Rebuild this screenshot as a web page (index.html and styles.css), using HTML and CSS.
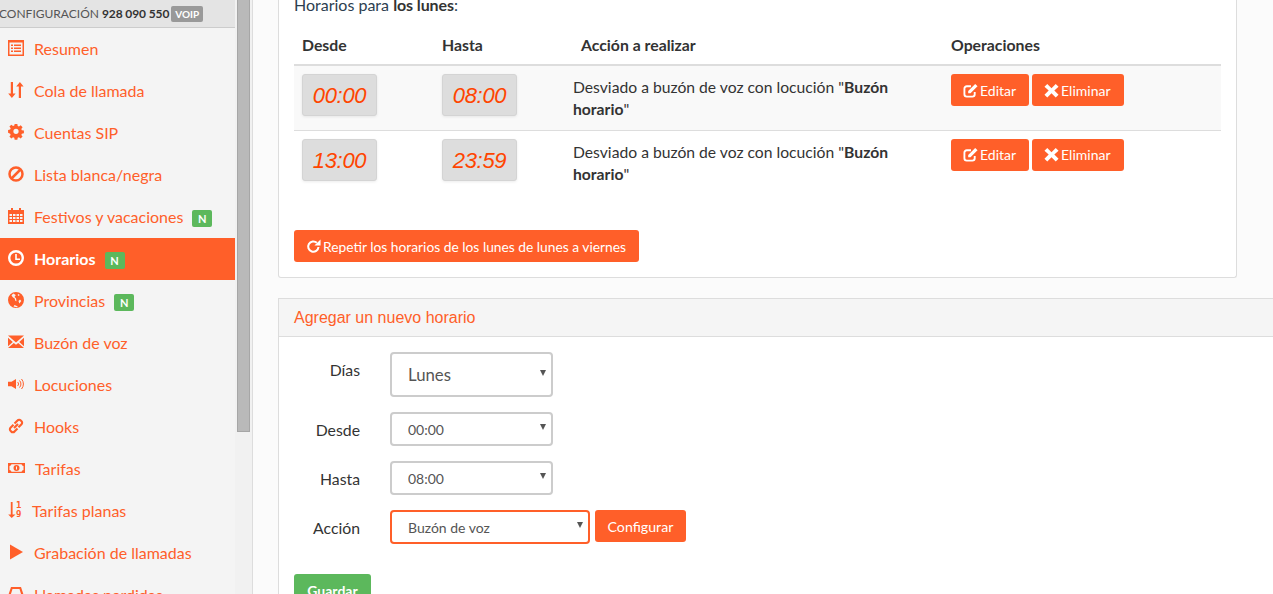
FILE: index.html
```html
<!DOCTYPE html>
<html lang="es">
<head>
<meta charset="utf-8">
<title>Horarios</title>
<link rel="stylesheet" href="styles.css">
</head>
<body>
<div class="app">
  <aside class="sidebar">
    <div class="side-top"><span class="cfg">CONFIGURACIÓN</span> <span class="num">928 090 550</span> <span class="voip">VOIP</span></div>
    <nav class="menu">
      <a class="item"><svg class="ic" viewBox="0 0 16 16"><path fill-rule="evenodd" d="M0 0h16v16H0zM1.500 2.500v12h13v-12zM3 4.500h2v1.500H3zM6 4.500h7v1.500H6zM3 7.500h2v1.500H3zM6 7.500h7v1.500H6zM3 10.500h2v1.500H3zM6 10.500h7v1.500H6z"/></svg><span>Resumen</span></a>
      <a class="item"><svg class="ic" viewBox="0 0 16 16"><path d="M2.800 0h2.200v11.500h2.600L3.900 16 .2 11.500h2.600zM10.800 16V4.500H8.200L11.900 0l3.700 4.500H13V16z"/></svg><span>Cola de llamada</span></a>
      <a class="item"><svg class="ic" viewBox="0 0 16 16"><path fill-rule="evenodd" d="M6.500 0h3l.4 2.300 1.400.6L13.200 1.500l2.100 2.100-1.400 1.900.6 1.400 2.300.4v3l-2.300.4-.6 1.400 1.400 1.900-2.100 2.100-1.900-1.400-1.400.6-.4 2.300h-3l-.4-2.300-1.400-.6-1.900 1.400-2.100-2.100 1.400-1.900-.6-1.400L-.8 9.600v-3l2.300-.4.6-1.400-1.400-1.900 2.100-2.100 1.900 1.400 1.400-.6zM8 5.200a2.900 2.900 0 1 0 0 5.800 2.900 2.900 0 0 0 0-5.800z" transform="translate(0.800 0) scale(.9)"/></svg><span>Cuentas SIP</span></a>
      <a class="item"><svg class="ic" viewBox="0 0 16 16"><circle cx="8" cy="8" r="6.500" fill="none" stroke="currentColor" stroke-width="2.500"/><path d="M3.500 12.500l9-9" stroke="currentColor" stroke-width="2.500"/></svg><span>Lista blanca/negra</span></a>
      <a class="item"><svg class="ic" viewBox="0 0 16 16"><path fill-rule="evenodd" d="M0 2h3V0h2v2h6V0h2v2h3v14H0zM1.500 6v1.900h2.500V6zM5 6v1.900h2.500V6zM8.500 6v1.900H11V6zM12 6v1.900h2.500V6zM1.500 9v1.900h2.500V9zM5 9v1.900h2.500V9zM8.500 9v1.900H11V9zM12 9v1.900h2.500V9zM1.500 12v1.900h2.500V12zM5 12v1.900h2.500V12zM8.500 12v1.900H11V12zM12 12v1.900h2.500V12z"/></svg><span>Festivos y vacaciones</span><b class="new">N</b></a>
      <a class="item active"><svg class="ic" viewBox="0 0 16 16"><path fill-rule="evenodd" d="M8 0a8 8 0 1 1 0 16A8 8 0 0 1 8 0zm0 2.400a5.600 5.600 0 1 0 0 11.200A5.600 5.600 0 0 0 8 2.400zM7.200 4h1.600v4.400H12V10H7.200z"/></svg><span>Horarios</span><b class="new">N</b></a>
      <a class="item"><svg class="ic" viewBox="0 0 16 16"><path fill-rule="evenodd" d="M8 0a8 8 0 1 1 0 16A8 8 0 0 1 8 0zM5.200 1.500L3.500 3.500l1.500 2 1.500.8 1 2.700 1 .3-.5-3L6.500 5l1.300-2zM10.500 2L9.500 3l1.200 1 1-1zM12 7.500L10.500 9l.8 2.500 2-2.500zM6.500 13l-1 1.500 3 .8 1.500-.8z"/></svg><span>Provincias</span><b class="new">N</b></a>
      <a class="item"><svg class="ic" viewBox="0 0 16 16"><path d="M0 1.500h16L8 8.500zM0 3.700l4.800 4.200L0 12.300zM16 3.700v8.600l-4.800-4.400zM5.800 8.900L8 10.800l2.200-1.900 5.800 5.200H0z"/></svg><span>Buzón de voz</span></a>
      <a class="item"><svg class="ic" viewBox="0 0 16 16"><path d="M0 5.800h3.500L8 3v10L3.500 10.200H0z"/><path d="M9.500 6a2.500 2.500 0 0 1 0 4M11.500 4.500a5 5 0 0 1 0 7M13.500 3a7.500 7.500 0 0 1 0 10" fill="none" stroke="currentColor" stroke-width="1"/></svg><span>Locuciones</span></a>
      <a class="item"><svg class="ic" viewBox="0 0 16 16"><g fill="none" stroke="currentColor" stroke-width="2.100"><path d="M6.500 5.500l3-3a2.100 2.100 0 0 1 3.300 0l.7.700a2.100 2.100 0 0 1 0 3l-3 3"/><path d="M9.500 10.500l-3 3a2.100 2.100 0 0 1-3.300 0l-.7-.7a2.100 2.100 0 0 1 0-3l3-3"/><path d="M6 10l4-4"/></g></svg><span>Hooks</span></a>
      <a class="item tarifas"><svg class="ic wide" viewBox="0 0 17 16"><path fill-rule="evenodd" d="M0 3h17v10H0zM1.500 6v4A2.500 2.500 0 0 1 3.500 11.700h10A2.500 2.500 0 0 1 15.500 10V6a2.500 2.500 0 0 1-2-1.700h-10A2.500 2.500 0 0 1 1.500 6zM8.500 5a3 3 0 1 1 0 6 3 3 0 0 1 0-6zM8 6.500v3h1v-3z"/></svg><span>Tarifas</span></a>
      <a class="item planas"><svg class="ic" viewBox="0 0 8 16"><path d="M2.800 0h1.800v12.500H7.500L3.700 16 .2 12.500h2.600z"/></svg><span class="mini"><i>1</i><i>9</i></span><span>Tarifas planas</span></a>
      <a class="item"><svg class="ic" viewBox="0 0 16 16"><path d="M2 .5l13 7.500-13 7.500z"/></svg><span>Grabación de llamadas</span></a>
      <a class="item"><svg class="ic" viewBox="0 0 16 16"><path fill-rule="evenodd" d="M3 1h10l3 9v5H0v-5zM4.500 3L2.500 9.500h11L11.500 3z"/></svg><span>Llamadas perdidas</span></a>
    </nav>
  </aside>
  <div class="scroll"><div class="thumb"></div></div>
  <main class="main">
    <section class="panel first">
      <p class="intro">Horarios para <strong>los lunes</strong>:</p>
      <table class="table">
        <thead>
          <tr><th class="c1">Desde</th><th class="c2">Hasta</th><th class="c3">Acción a realizar</th><th>Operaciones</th></tr>
        </thead>
        <tbody>
          <tr class="odd">
            <td><div class="clock">00:00</div></td>
            <td><div class="clock">08:00</div></td>
            <td class="desc">Desviado a buzón de voz con locución "<strong>Buzón horario</strong>"</td>
            <td class="ops">
              <button class="btn"><svg class="bi" viewBox="0 0 16 16"><path d="M12.500 9.500V12a2.500 2.500 0 0 1-2.500 2.500H4A2.500 2.500 0 0 1 1.500 12V6A2.500 2.500 0 0 1 4 3.500h4.500" fill="none" stroke="currentColor" stroke-width="2"/><path d="M13 1l2.500 2.500L8 11H5.500V8.500z"/></svg>Editar</button>
              <button class="btn"><svg class="bi" viewBox="0 0 16 16"><path d="M3.500 1L8 5.500 12.500 1 15.500 4 11 8l4.500 4.500-3 3L8 11l-4.500 4.500-3-3L5 8 .5 4z"/></svg>Eliminar</button>
            </td>
          </tr>
          <tr>
            <td><div class="clock">13:00</div></td>
            <td><div class="clock">23:59</div></td>
            <td class="desc">Desviado a buzón de voz con locución "<strong>Buzón horario</strong>"</td>
            <td class="ops">
              <button class="btn"><svg class="bi" viewBox="0 0 16 16"><path d="M12.500 9.500V12a2.500 2.500 0 0 1-2.500 2.500H4A2.500 2.500 0 0 1 1.500 12V6A2.500 2.500 0 0 1 4 3.500h4.500" fill="none" stroke="currentColor" stroke-width="2"/><path d="M13 1l2.500 2.500L8 11H5.500V8.500z"/></svg>Editar</button>
              <button class="btn"><svg class="bi" viewBox="0 0 16 16"><path d="M3.500 1L8 5.500 12.500 1 15.500 4 11 8l4.500 4.500-3 3L8 11l-4.500 4.500-3-3L5 8 .5 4z"/></svg>Eliminar</button>
            </td>
          </tr>
        </tbody>
      </table>
      <button class="btn repeat"><svg class="bi" viewBox="0 0 16 16"><path d="M13.300 8.500a5.500 5.500 0 1 1-1.700-4.400" fill="none" stroke="currentColor" stroke-width="2.200"/><path d="M15.500 0.500V7H9z"/></svg>Repetir los horarios de los lunes de lunes a viernes</button>
    </section>
    <section class="panel second">
      <h3 class="panel-head">Agregar un nuevo horario</h3>
      <form class="form">
        <div class="row dias"><label class="lab">Días</label><div class="sel big"><select><option>Lunes</option></select></div></div>
        <div class="row"><label class="lab">Desde</label><div class="sel"><select><option>00:00</option></select></div></div>
        <div class="row"><label class="lab">Hasta</label><div class="sel"><select><option>08:00</option></select></div></div>
        <div class="row accion"><label class="lab">Acción</label><div class="sel long"><select><option>Buzón de voz</option></select></div><button type="button" class="btn conf">Configurar</button></div>
        <button type="button" class="btn save">Guardar</button>
      </form>
    </section>
  </main>
</div>
</body>
</html>
```
FILE: styles.css
```css
* { box-sizing: border-box; }
html, body { margin: 0; height: 100%; overflow: hidden; }
body { font-family: Lato, "Liberation Sans", sans-serif; font-size: 15px; color: #333; background: #fbfbfb; }
.app { display: flex; height: 594px; overflow: hidden; }

.sidebar { width: 235px; flex: none; background: #f4f4f4; height: 594px; overflow: hidden; }
.side-top { height: 28px; background: #e4e4e4; border-bottom: 1px solid #ccc; font-size: 12px; line-height: 27px; white-space: nowrap; display: flex; align-items: center; gap: 2px; overflow: hidden; }
.cfg { color: #555; margin-left: -1px; }
.num { color: #333; font-weight: 700; font-size: 12px; letter-spacing: -.1px; margin-left: 1px; }
.voip { background: #999; color: #fff; font-weight: 700; font-size: 10px; line-height: 16px; height: 16px; padding: 0 4px; border-radius: 2px; }
.menu { display: flex; flex-direction: column; }
.item { display: flex; align-items: center; height: 42px; flex: none; padding-left: 8px; padding-bottom: 2px; color: #ff5f2a; font-size: 16px; }
.ic { width: 16px; height: 16px; fill: currentColor; flex: none; margin-right: 10px; margin-top: -1px; overflow: visible; }
.item.active { background: #ff5f29; color: #fff; font-weight: 700; }
.new { background: #5cb85c; color: #fff; font-size: 11px; font-weight: 700; width: 20px; height: 17px; line-height: 17px; text-align: center; border-radius: 2px; margin-left: 9px; margin-top: 5px; }
.tarifas .ic { width: 17px; }
.planas .ic { width: 8px; margin-right: 0; }
.mini { display: flex; flex-direction: column; width: 8px; margin-right: 8px; font-family: "DejaVu Sans Mono", monospace; font-size: 9px; line-height: 9px; margin-top: -1px; }
.mini i { font-style: normal; font-weight: 700; }

.scroll { width: 18px; flex: none; background: #f1f1f1; padding: 0 2px; border-right: 1px solid #ddd; }
.thumb { width: 13px; height: 432px; background: #b9b9b9; border: 1px solid #a6a6a6; border-top: 0; }

.main { flex: 1; min-width: 0; padding-left: 25px; display: flex; flex-direction: column; gap: 20px; overflow: hidden; }
.panel { background: #fff; border: 1px solid #ddd; flex: none; }
.first { width: 959px; height: 279px; margin-top: -1px; padding: 0 15px; border-radius: 0 0 3px 3px; border-top: 0; }
.intro { margin: 0; height: 32px; line-height: 12px; font-size: 16px; color: #2c3e50; }
.intro strong { font-weight: 700; color: #333; letter-spacing: -.1px; }
.table { width: 927px; border-collapse: collapse; table-layout: fixed; }
.table th { text-align: left; font-weight: 700; font-size: 15.800px; color: #333; padding: 0 8px 6px; height: 34px; border-bottom: 2px solid #ddd; }
.c1 { width: 140px; }
.c2 { width: 139px; }
.c3 { width: 370px; }
.table td { padding: 8px; height: 65px; vertical-align: top; }
.odd td { background: #f9f9f9; border-bottom: 1px solid #ddd; }
.clock { width: 75px; height: 42px; background: #ddd; border: 1px solid #d4d4d4; border-radius: 3px; box-shadow: 0 1px 3px rgba(0,0,0,.08); color: #ff4500; font-family: "Liberation Sans", sans-serif; font-style: italic; font-size: 22px; line-height: 41px; text-align: center; letter-spacing: -.3px; }
.table td.desc { font-size: 15.700px; line-height: 22px; color: #333; padding: 0 8px 0 0; vertical-align: middle; }
.desc strong { font-weight: 700; }
.ops { white-space: nowrap; font-size: 0; }
.btn { font-family: inherit; background: #ff5f29; color: #fff; border: 0; border-radius: 3px; font-size: 14px; height: 32px; padding: 0 12px; display: inline-flex; align-items: center; gap: 3px; }
.ops .btn { padding: 0 13px 0 12px; }
.ops .btn + .btn { margin-left: 3px; }
.bi { width: 15px; height: 15px; margin-right: -1px; fill: currentColor; flex: none; }
.repeat { margin-top: 35px; padding: 0 13px 0 12px; font-size: 13.800px; }

.second { border-right: 0; height: 320px; }
.panel-head { margin: 0; height: 38px; line-height: 37px; padding-left: 15px; background: #f5f5f5; border-bottom: 1px solid #ddd; color: #ff5f29; font-family: "Liberation Sans", sans-serif; font-size: 16px; font-weight: 400; }
.form { padding: 15px 15px 0; display: flex; flex-direction: column; align-items: flex-start; }
.row { display: flex; align-items: center; height: 34px; margin-bottom: 15px; }
.row.dias { height: 45px; align-items: flex-start; }
.lab { width: 66px; text-align: right; margin-right: 30px; font-size: 15.800px; color: #333; flex: none; white-space: nowrap; }
.dias .lab { line-height: 36px; }
.sel { position: relative; width: 163px; height: 34px; flex: none; }
.sel.big { height: 45px; }
.sel.long { width: 200px; }
.sel::after { content: ""; position: absolute; right: 7px; top: 12px; border-left: 3px solid transparent; border-right: 3px solid transparent; border-top: 6px solid #555; pointer-events: none; }
.sel.big::after { top: 18px; }
.sel select { width: 100%; height: 100%; appearance: none; -webkit-appearance: none; background: #fff; border: 2px solid #ccc; border-radius: 4px; padding: 0 0 0 16px; font-family: inherit; font-size: 14px; color: #555; outline: 0; }
.sel.big select { font-size: 16.800px; }
.sel.long select { border-color: #ff5f29; }
.conf { margin-left: 5px; margin-top: -2px; padding: 0 12.500px; font-size: 14.200px; }
.save { background: #5cb85c; margin-top: 15px; padding: 0 13px; height: 32px; width: 77px; justify-content: center; font-weight: 700; flex: none; }
```
